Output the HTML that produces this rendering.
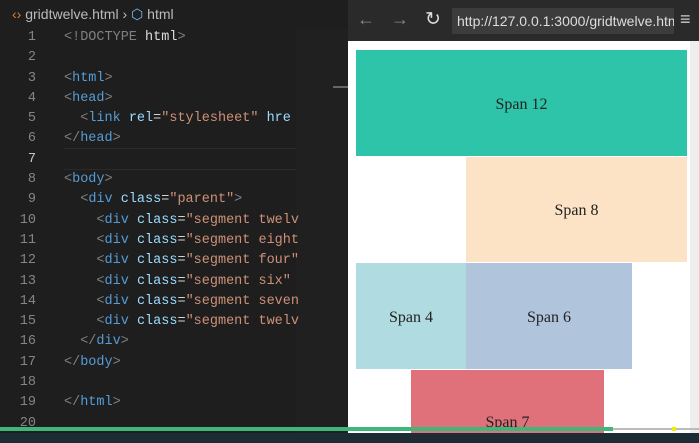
<!DOCTYPE html>
<html><head><style>
html,body{margin:0;width:699px;height:443px;overflow:hidden}
body{background:#1e1e1e;position:relative;font-family:"Liberation Sans",sans-serif}
.ed{position:absolute;left:0;top:0;width:348px;height:443px;background:#1e1e1e;overflow:hidden}
.bc{position:absolute;left:12px;top:6px;color:#bbb;font-size:14px}
.code{position:absolute;left:0;top:28px;font-family:"Liberation Mono",monospace;font-size:13.5px;line-height:20.3px;white-space:pre;color:#d4d4d4}
.ln{display:inline-block;width:36px;text-align:right;color:#858585;margin-right:28px}
.t{color:#808080}.n{color:#569cd6}.a{color:#9cdcfe}.s{color:#ce9178}
.br{position:absolute;left:348px;top:0;width:351px;height:443px;background:#fff;overflow:hidden}
.tb{position:absolute;left:0;top:0;width:351px;height:41px;background:#2a2a2a}
.url{position:absolute;left:104px;top:8px;width:217px;height:26px;background:#3c3c3c;color:#ddd;font-size:14px;line-height:26px;padding-left:5px;overflow:hidden;white-space:nowrap}
.bx{position:absolute;font-family:"Liberation Serif",serif;font-size:16px;color:#222;display:flex;align-items:center;justify-content:center;padding-top:3px;box-sizing:border-box}
</style></head><body>
<div class="ed">
<div class="bc"><span style="color:#e37933">‹›</span> gridtwelve.html › <span style="color:#75beff">⬡</span> html</div>
<div style="position:absolute;left:296px;top:28px;width:52px;height:405px;background:#202020"></div>
<div style="position:absolute;left:333px;top:86px;width:15px;height:2px;background:#666"></div>
<div style="position:absolute;left:64px;top:148px;width:232px;height:20px;border-top:1px solid #2a2a2a;border-bottom:1px solid #2a2a2a"></div>
<div class="code"><span class="ln">1</span><span class="t">&lt;!DOCTYPE</span> <span style="color:#ddd">html</span><span class="t">&gt;</span>
<span class="ln">2</span>
<span class="ln">3</span><span class="t">&lt;</span><span class="n">html</span><span class="t">&gt;</span>
<span class="ln">4</span><span class="t">&lt;</span><span class="n">head</span><span class="t">&gt;</span>
<span class="ln">5</span>  <span class="t">&lt;</span><span class="n">link</span> <span class="a">rel</span>=<span class="s">"stylesheet"</span> <span class="a">hre</span>
<span class="ln">6</span><span class="t">&lt;/</span><span class="n">head</span><span class="t">&gt;</span>
<span class="ln" style="color:#c6c6c6">7</span>
<span class="ln">8</span><span class="t">&lt;</span><span class="n">body</span><span class="t">&gt;</span>
<span class="ln">9</span>  <span class="t">&lt;</span><span class="n">div</span> <span class="a">class</span>=<span class="s">"parent"</span><span class="t">&gt;</span>
<span class="ln">10</span>    <span class="t">&lt;</span><span class="n">div</span> <span class="a">class</span>=<span class="s">"segment twelv</span>
<span class="ln">11</span>    <span class="t">&lt;</span><span class="n">div</span> <span class="a">class</span>=<span class="s">"segment eight</span>
<span class="ln">12</span>    <span class="t">&lt;</span><span class="n">div</span> <span class="a">class</span>=<span class="s">"segment four"</span>
<span class="ln">13</span>    <span class="t">&lt;</span><span class="n">div</span> <span class="a">class</span>=<span class="s">"segment six"</span>
<span class="ln">14</span>    <span class="t">&lt;</span><span class="n">div</span> <span class="a">class</span>=<span class="s">"segment seven</span>
<span class="ln">15</span>    <span class="t">&lt;</span><span class="n">div</span> <span class="a">class</span>=<span class="s">"segment twelv</span>
<span class="ln">16</span>  <span class="t">&lt;/</span><span class="n">div</span><span class="t">&gt;</span>
<span class="ln">17</span><span class="t">&lt;/</span><span class="n">body</span><span class="t">&gt;</span>
<span class="ln">18</span>
<span class="ln">19</span><span class="t">&lt;/</span><span class="n">html</span><span class="t">&gt;</span>
<span class="ln">20</span></div>
</div>
<div class="br">
<div class="tb">
<span style="position:absolute;left:9px;top:9px;color:#888;font-size:18px">←</span>
<span style="position:absolute;left:43px;top:9px;color:#888;font-size:18px">→</span>
<span style="position:absolute;left:77px;top:8px;color:#ddd;font-size:19px">↻</span>
<div class="url">http://127.0.0.1:3000/gridtwelve.html</div>
<span style="position:absolute;left:332px;top:9px;color:#ccc;font-size:18px">≡</span>
</div>
<div style="position:absolute;left:342px;top:41px;width:9px;height:402px;background:#eee"></div>
<div class="bx" style="left:8px;top:50px;width:331px;height:106px;background:#2ec4a9">Span 12</div>
<div class="bx" style="left:118px;top:157px;width:221px;height:105px;background:#fde3c6">Span 8</div>
<div class="bx" style="left:8px;top:263px;width:110px;height:106px;background:#b0dbe1">Span 4</div>
<div class="bx" style="left:118px;top:263px;width:166px;height:106px;background:#b0c4dc">Span 6</div>
<div class="bx" style="left:63px;top:370px;width:193px;height:73px;background:#e0707a;align-items:flex-start;padding-top:44px">Span 7</div>
</div>
<div style="position:absolute;left:0;top:427px;width:613px;height:4px;background:#3fb77a"></div>
<div style="position:absolute;left:613px;top:428px;width:86px;height:2px;background:#bbb"></div>
<div style="position:absolute;left:672px;top:427px;width:4px;height:4px;background:#ee0"></div>
<div style="position:absolute;left:0;top:433px;width:699px;height:10px;background:#1c2b34"></div>
</body></html>
